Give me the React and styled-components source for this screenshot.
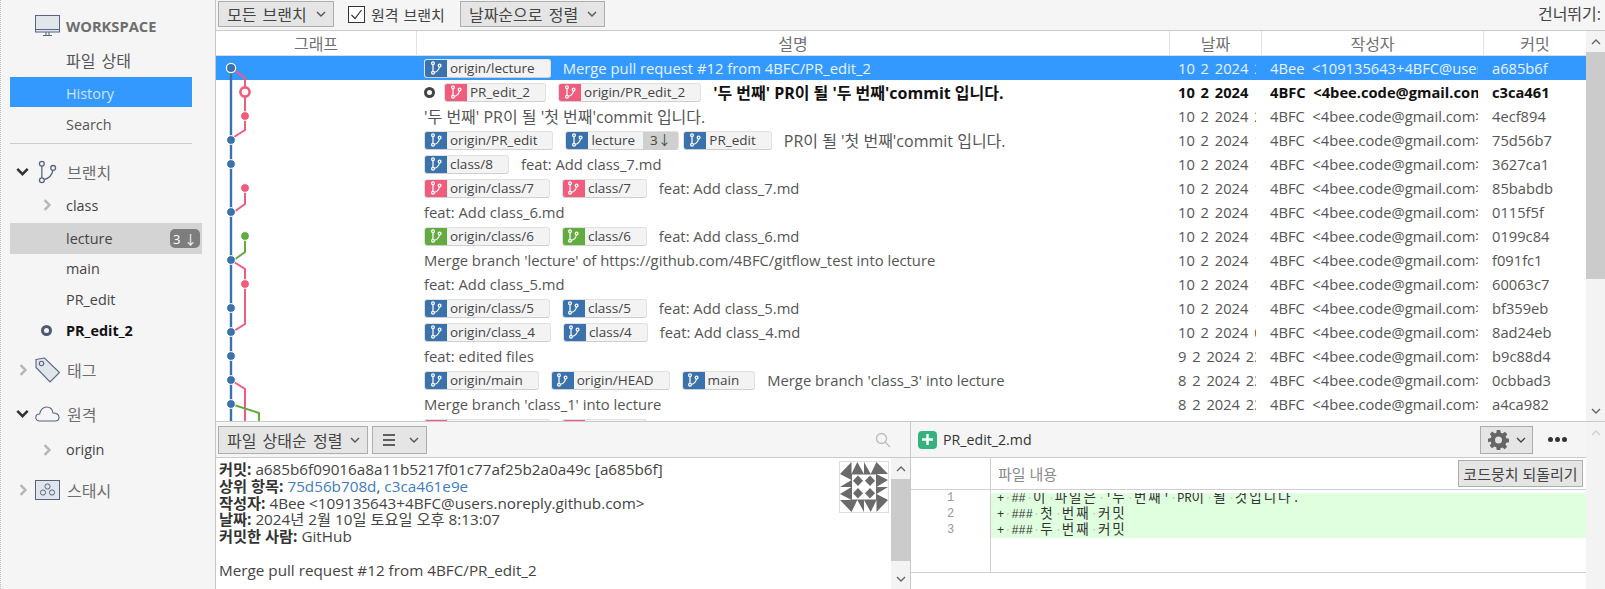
import React from 'react';
import styled, { createGlobalStyle } from 'styled-components';

const Global = createGlobalStyle`
  html, body { margin: 0; padding: 0; background: #f5f5f5; }
  * { box-sizing: border-box; }
  body { font-family: "Open Sans", "Noto Sans CJK KR", sans-serif; font-size: 14px; color: #444; }
`;

const App_ = styled.div`display:flex;width:1605px;height:589px;overflow:hidden;background:#f5f5f5;`;
const Sidebar = styled.aside`width:216px;flex:none;background:#f5f5f5;border-left:1px dotted #bbb;border-right:1px solid #c8c8c8;padding:0 23px 0 9px;display:flex;flex-direction:column;`;
const WorkspaceHead = styled.div`height:46px;display:flex;align-items:center;gap:5px;padding:6px 0 0 25px;font-weight:700;color:#6e6e6e;font-size:14.7px;`;
const NavItem = styled.div`height:${p => p.$h || 31}px;line-height:${p => p.$h || 31}px;padding-left:56px;padding-top:${p => p.$pt || 0}px;box-sizing:content-box;font-size:${p => p.$ko ? 16 : 14.4}px;word-spacing:${p => p.$ko ? 2 : 0}px;
  color:${p => p.$active ? '#cfe4ff' : '#555'};background:${p => p.$active ? '#3399ff' : 'transparent'};`;
const Divider = styled.div`height:1px;background:#ccc;margin:3px 0 12px;`;
const SectionHead = styled.div`display:flex;align-items:center;height:31px;color:#6e6e6e;font-size:16px;margin-top:${p => p.$mt || 0}px;`;
const HeadChevron = styled.span`width:25px;display:flex;justify-content:center;color:${p => p.$open ? '#333' : '#b5b5b5'};`;
const HeadIcon = styled.span`width:32px;display:flex;justify-content:flex-start;`;
const BranchItem = styled.div`position:relative;display:flex;align-items:center;height:${p => p.$h || 30.6}px;padding-left:56px;margin-right:${p => p.$wide ? -10 : 0}px;
  background:${p => p.$wide ? '#d4d4d4' : 'transparent'};font-size:14.4px;font-weight:${p => p.$bold ? 700 : 400};color:${p => p.$bold ? '#111' : '#444'};`;
const ItemMark = styled.span`position:absolute;left:31px;display:flex;color:#b5b5b5;`;
const HeadDot = styled.span`position:absolute;left:31px;width:11px;height:11px;border-radius:50%;border:3px solid #4d5a70;`;
const CountBadge = styled.span`margin-left:auto;margin-right:2px;width:30px;height:19px;border-radius:5px;background:#7d7d7d;color:#fff;font-size:13px;display:flex;align-items:center;justify-content:center;`;

const Main = styled.main`flex:1;min-width:0;display:flex;flex-direction:column;`;
const TopBar = styled.div`height:31px;flex:none;display:flex;align-items:flex-start;padding:1px 4px 0 2px;border-bottom:1px solid #cacaca;background:#f5f5f5;`;
const DropBtn = styled.button`height:${p => p.$h || 26}px;width:${p => p.$w}px;margin-right:${p => p.$mr || 0}px;flex:none;padding:0 0 0 8px;display:flex;align-items:center;justify-content:space-between;
  border:1px solid #adadad;background:#e5e5e5;font:inherit;font-size:16px;word-spacing:2px;color:#444;`;
const BtnChevron = styled.span`display:flex;padding-right:7px;color:#555;`;
const CheckLabel = styled.label`display:flex;align-items:center;gap:6px;height:26px;margin:0 15px 0 14px;font-size:15px;word-spacing:1px;color:#444;`;
const CheckBox = styled.span`width:17px;height:17px;border:1px solid #333;background:#fff;display:flex;align-items:center;justify-content:center;`;
const SkipLabel = styled.span`margin-left:auto;height:26px;line-height:26px;font-size:16px;color:#444;`;

const ListArea = styled.div`height:390px;flex:none;display:flex;background:#fff;`;
const ListBody = styled.div`position:relative;flex:1;min-width:0;overflow:hidden;`;
const gridCols = '201px 753px 92px 222px 102px';
const HeaderRow = styled.div`display:grid;grid-template-columns:${gridCols};height:25px;border-bottom:1px solid #dcdcdc;`;
const HeaderCell = styled.div`display:flex;align-items:center;justify-content:center;color:#707070;font-size:16px;border-right:${p => p.$last ? 0 : 1}px solid #e2e2e2;`;
const Row = styled.div`display:grid;grid-template-columns:${gridCols};height:24px;align-items:center;
  background:${p => p.$sel ? '#3399ff' : 'transparent'};color:${p => p.$sel ? '#e8f3ff' : p.$bold ? '#111' : '#555'};font-weight:${p => p.$bold ? 700 : 400};font-size:14.7px;`;
const DescCell = styled.div`display:flex;align-items:center;height:24px;padding-left:7px;white-space:nowrap;overflow:hidden;`;
const Message = styled.span`font-size:${p => p.$ko ? 16 : 14.8}px;`;
const DateCell = styled.div`margin:0 6px 0 8px;white-space:pre;overflow:hidden;height:24px;line-height:24px;word-spacing:2px;`;
const ClipCell = styled.div`margin:0 6px 0 8px;white-space:pre;overflow:hidden;height:24px;line-height:24px;`;
const TagChip = styled.span`display:flex;align-items:stretch;flex:none;height:19px;margin-right:${p => p.$mr ?? 12}px;border-radius:3px;background:#f3f3f3;border:1px solid #e2e2e2;border-bottom-color:#cfcfcf;overflow:hidden;color:#444;font-weight:400;font-size:13.5px;`;
const TagIcon = styled.span`width:23px;flex:none;display:flex;align-items:center;justify-content:center;background:${p => p.$c};margin:-1px 0 -1px -1px;`;
const TagName = styled.span`padding:0 15px 0 3px;line-height:17px;`;
const TagCount = styled.span`background:#cfcfcf;padding:0 7px;line-height:17px;margin-left:-7px;`;
const CurrentDot = styled.span`width:11px;height:11px;margin:0 9px 0 0;border-radius:50%;border:3px solid #444;flex:none;`;
const GraphLayer = styled.svg`position:absolute;left:0;top:0;pointer-events:none;`;

const Track = styled.div`width:19px;flex:none;background:#f3f3f3;display:flex;flex-direction:column;`;
const TrackBtn = styled.div`height:21px;flex:none;display:flex;align-items:center;justify-content:center;color:${p => p.$dim ? '#d0d0d0' : '#666'};`;
const Thumb = styled.div`height:${p => p.$h}px;flex:none;background:#cbcbcb;`;
const TrackGap = styled.div`flex:1;`;

const Bottom = styled.div`flex:1;min-height:0;display:flex;border-top:1px solid #cacaca;background:#fff;`;
const LeftPane = styled.section`width:695px;flex:none;display:flex;flex-direction:column;border-right:1px solid #cacaca;`;
const PaneBar = styled.div`height:36px;flex:none;display:flex;align-items:center;background:#f5f5f5;border-bottom:1px solid #cacaca;padding-left:2px;`;
const SearchIcon = styled.span`margin-left:auto;margin-right:19px;display:flex;color:#bdbdbd;`;
const DetailWrap = styled.div`flex:1;min-height:0;display:flex;`;
const DetailText = styled.div`flex:1;min-width:0;padding:3px 0 0 3px;font-size:15.25px;line-height:16.75px;color:#444;white-space:pre;`;
const Label = styled.b`font-weight:700;color:#333;`;
const Hash = styled.span`color:#3f7cbd;`;
const Avatar = styled.svg`flex:none;margin:3px 2px 0 0;border:1px solid #ddd;background:#fff;`;
const RightPane = styled.section`flex:1;min-width:0;display:flex;`;
const RightCol = styled.div`flex:1;min-width:0;display:flex;flex-direction:column;background:#fff;`;
const FileBar = styled.div`height:36px;flex:none;display:flex;align-items:center;padding-left:7px;background:#f5f5f5;border-bottom:1px solid #cacaca;font-size:14.2px;color:#333;`;
const PlusBadge = styled.span`width:19px;height:18px;border-radius:4px;background:#35b27d;color:#fff;display:flex;align-items:center;justify-content:center;margin-right:6px;`;
const GearBtn = styled.button`margin-left:auto;width:53px;height:28px;display:flex;align-items:center;gap:7px;padding:0 0 0 7px;border:1px solid #adadad;background:#e5e5e5;color:#666;`;
const GearChevron = styled.span`display:flex;color:#444;`;
const MoreDots = styled.span`margin:0 19px 0 15px;display:flex;gap:2px;`;
const Dot = styled.i`width:5px;height:5px;border-radius:50%;background:#333;`;
const ContentHead = styled.div`height:32px;flex:none;display:flex;align-items:center;border-bottom:1px solid #cfcfcf;`;
const GutterSpace = styled.div`width:80px;height:100%;flex:none;border-right:1px solid #cfcfcf;`;
const ContentTitle = styled.span`padding-left:7px;color:#8a8a8a;font-size:15px;`;
const RevertBtn = styled.button`margin-left:auto;margin-right:3px;width:125px;height:27px;border:1px solid #adadad;background:#e5e5e5;font:inherit;font-size:15px;color:#444;padding:0;white-space:nowrap;`;
const DiffWrap = styled.div`height:83px;flex:none;display:flex;border-bottom:1px solid #cfcfcf;`;
const Gutter = styled.div`width:80px;flex:none;border-right:1px solid #cfcfcf;font-family:"Liberation Mono",monospace;font-size:12px;line-height:16px;color:#999;text-align:center;`;
const Lines = styled.div`flex:1;min-width:0;padding-top:3px;`;
const LinesClip = styled.div`overflow:hidden;`;
const LinesInner = styled.div`margin-top:-3px;`;
const CodeLine = styled.div`height:16px;line-height:16px;background:#dfffdf;padding-left:6px;font-family:"Liberation Mono",monospace;font-size:12px;color:#333;white-space:pre;`;
const Ko = styled.span`font-family:"Noto Sans CJK KR",sans-serif;font-size:13.5px;letter-spacing:2px;line-height:1;`;
const Ws = styled.span`color:#c2d6c2;`;

const BranchGlyph = ({ size = 14, c = '#fff', w = 1.25 }) => (
  <svg width={size} height={size} viewBox="0 0 14 14" fill="none" stroke={c} strokeWidth={w}>
    <circle cx="4" cy="2.2" r="1.4" /><circle cx="4" cy="11.8" r="1.4" /><circle cx="10.6" cy="4.6" r="1.4" />
    <path d="M4 3.6V10.4M10.4 6C10 8.6 8 10.6 5.4 11.4" />
  </svg>
);
const Chev = ({ d, size = 10, w = 1.4 }) => {
  const p = { down: 'M1 3l4 4 4-4', right: 'M3 1l4 4-4 4', up: 'M1 7l4-4 4 4' }[d];
  return <svg width={size} height={size} viewBox="0 0 10 10" fill="none" stroke="currentColor" strokeWidth={w}><path d={p} /></svg>;
};
const S = '#56657f';
const MonitorIcon = () => (
  <svg width="26" height="22" viewBox="0 0 26 22" fill="#e1e5ec" stroke={S} strokeWidth="1">
    <rect x=".5" y=".5" width="24" height="16.5" /><path d="M.5 14.5h24" fill="none" /><path d="M8 20.5h9M11 17v3.5M14 17v3.5" fill="none" />
  </svg>
);
const TagGlyph = () => (
  <svg width="26" height="26" viewBox="0 0 26 26" fill="#e1e5ec" stroke={S} strokeWidth="1.1">
    <path d="M1 2.5 9.5 1 24.5 15.5 15 25 1 10.5Z" /><circle cx="6.5" cy="6.5" r="2.2" fill="none" />
  </svg>
);
const CloudIcon = () => (
  <svg width="25" height="16" viewBox="0 0 25 16" fill="none" stroke={S} strokeWidth="1.1">
    <path d="M5 15C2 15 .8 13 .8 11.5 .8 9.5 2.5 8 4.6 8 5.2 3.5 8.5 1 11.5 1c3.5 0 6 2.5 6.5 6 3 -.2 6 1.5 6 4.2 0 2.2-1.6 3.8-4 3.8Z" />
  </svg>
);
const StashIcon = () => (
  <svg width="25" height="20" viewBox="0 0 25 20" fill="#e1e5ec" stroke={S} strokeWidth="1">
    <rect x=".5" y=".5" width="24" height="19" /><circle cx="12.5" cy="6.5" r="2.6" fill="none" /><circle cx="8" cy="12.5" r="2.6" fill="none" /><circle cx="17" cy="12.5" r="2.6" fill="none" />
  </svg>
);

const BLUE = '#3a72ae', PINK = '#f25c7c', GREEN = '#62ac3f';
const nodes = [
  [231, 68, BLUE], [245, 116, PINK], [231, 140, BLUE], [231, 164, BLUE], [245, 188, PINK], [231, 212, BLUE], [245, 236, GREEN],
  [231, 260, BLUE], [245, 284, PINK], [231, 308, BLUE], [231, 332, BLUE], [231, 356, BLUE], [231, 380, BLUE], [231, 404, BLUE],
].map(([x, y, c]) => [x - 216, y - 31, c]);
const Graph = () => (
  <GraphLayer width="201" height="390" viewBox="0 0 201 390" fill="none">
    <path d="M15 37V390" stroke={BLUE} strokeWidth="2.4" />
    <path d="M15 37 29 47V99L18 106" stroke={PINK} strokeWidth="2" />
    <path d="M29 157V173L18 181" stroke={PINK} strokeWidth="2" />
    <path d="M29 205V221L18 229" stroke={GREEN} strokeWidth="2" />
    <path d="M18 231 29 238V293L18 300" stroke={PINK} strokeWidth="2" />
    <path d="M18 351 29 358V390" stroke={PINK} strokeWidth="2" />
    <path d="M18 374 43 382V390" stroke={GREEN} strokeWidth="2" />
    {nodes.map(([x, y, c], i) => (
      <circle key={i} cx={x} cy={y} r={i === 0 ? 4.6 : 4.4} fill={c} stroke="#fff" strokeWidth={i === 0 ? 1.2 : 1} />
    ))}
    <circle cx="29" cy="61" r="4.6" fill="#fff" stroke={PINK} strokeWidth="2.6" />
  </GraphLayer>
);

const identiconWhite = 'M0 0H12L0 12ZM12 0H18L12 12ZM18 0H25V12ZM0 12 12 18 0 25ZM12.500 12.500H25V25H12.500Z';
const identiconDark = 'M18.700 13.500 24 18.700 18.700 24 13.500 18.700Z';
const Identicon = () => (
  <Avatar width="50" height="52" viewBox="0 0 50 50" preserveAspectRatio="none">
    <rect width="50" height="50" fill="#6a6a6a" />
    {[0, 90, 180, 270].map(r => (
      <g key={r} transform={`rotate(${r} 25 25)`}>
        <path d={identiconWhite} fill="#fff" />
        <path d={identiconDark} fill="#6a6a6a" />
      </g>
    ))}
  </Avatar>
);

const B = 'blue', P = 'pink', G = 'green';
const colorOf = { blue: BLUE, pink: PINK, green: GREEN };
const mail = '4BFC  <4bee.code@gmail.com>';
const rows = [
  { tags: [['origin/lecture', B]], msg: 'Merge pull request #12 from 4BFC/PR_edit_2', date: '10 2 2024 20:13', au: '4Bee  <109135643+4BFC@users.noreply', h: 'a685b6f', sel: true },
  { cur: true, tags: [['PR_edit_2', P], ['origin/PR_edit_2', P]], msg: "'두 번째' PR이 될 '두 번째'commit 입니다.", date: '10 2 2024', au: mail, h: 'c3ca461', bold: true },
  { tags: [], msg: "'두 번째' PR이 될 '첫 번째'commit 입니다.", date: '10 2 2024 20:05', au: mail, h: '4ecf894' },
  { tags: [['origin/PR_edit', B], ['lecture', B, '3↓'], ['PR_edit', B]], msg: "PR이 될 '첫 번째'commit 입니다.", date: '10 2 2024 19:50', au: mail, h: '75d56b7' },
  { tags: [['class/8', B]], msg: 'feat: Add class_7.md', date: '10 2 2024 19:40', au: mail, h: '3627ca1' },
  { tags: [['origin/class/7', P], ['class/7', P]], msg: 'feat: Add class_7.md', date: '10 2 2024 19:30', au: mail, h: '85babdb' },
  { tags: [], msg: 'feat: Add class_6.md', date: '10 2 2024 19:20', au: mail, h: '0115f5f' },
  { tags: [['origin/class/6', G], ['class/6', G]], msg: 'feat: Add class_6.md', date: '10 2 2024 19:10', au: mail, h: '0199c84' },
  { tags: [], msg: "Merge branch 'lecture' of https://github.com/4BFC/gitflow_test into lecture", date: '10 2 2024 18:55', au: mail, h: 'f091fc1' },
  { tags: [], msg: 'feat: Add class_5.md', date: '10 2 2024 18:40', au: mail, h: '60063c7' },
  { tags: [['origin/class/5', B], ['class/5', B]], msg: 'feat: Add class_5.md', date: '10 2 2024 18:30', au: mail, h: 'bf359eb' },
  { tags: [['origin/class_4', B], ['class/4', B]], msg: 'feat: Add class_4.md', date: '10 2 2024 00:30', au: mail, h: '8ad24eb' },
  { tags: [], msg: 'feat: edited files', date: '9 2 2024 23:30', au: mail, h: 'b9c88d4' },
  { tags: [['origin/main', B], ['origin/HEAD', B], ['main', B]], msg: "Merge branch 'class_3' into lecture", date: '8 2 2024 23:30', au: mail, h: '0cbbad3' },
  { tags: [], msg: "Merge branch 'class_1' into lecture", date: '8 2 2024 23:10', au: mail, h: 'a4ca982' },
  { tags: [['origin/class/3', P], ['class/3', P]], msg: '', date: '', au: '', h: '' },
];

const Tag = ({ name, color, count }) => (
  <TagChip $mr={count ? 4 : undefined}>
    <TagIcon $c={colorOf[color]}><BranchGlyph /></TagIcon>
    <TagName>{name}</TagName>
    {count && <TagCount>{count}</TagCount>}
  </TagChip>
);

const code = [
  <>+<Ws>·</Ws>##<Ws>·</Ws><Ko>이</Ko><Ws>·</Ws><Ko>파일은</Ko><Ws>·</Ws>'<Ko>두</Ko><Ws>·</Ws><Ko>번째</Ko>'<Ws>·</Ws>PR<Ko>이</Ko><Ws>·</Ws><Ko>될</Ko><Ws>·</Ws><Ko>것입니다</Ko>.</>,
  <>+<Ws>·</Ws>###<Ws>·</Ws><Ko>첫</Ko><Ws>·</Ws><Ko>번째</Ko><Ws>·</Ws><Ko>커밋</Ko></>,
  <>+<Ws>·</Ws>###<Ws>·</Ws><Ko>두</Ko><Ws>·</Ws><Ko>번째</Ko><Ws>·</Ws><Ko>커밋</Ko></>,
];

export default function App() {
  return (
    <App_>
      <Global />
      <Sidebar>
        <WorkspaceHead><MonitorIcon />WORKSPACE</WorkspaceHead>
        <NavItem $ko>파일 상태</NavItem>
        <NavItem $active $h={27} $pt={3}>History</NavItem>
        <NavItem $pt={2}>Search</NavItem>
        <Divider />
        <SectionHead><HeadChevron $open><Chev d="down" size={13} w={2} /></HeadChevron><HeadIcon><BranchGlyph size={24} c={S} w={.75} /></HeadIcon>브랜치</SectionHead>
        <BranchItem $h={36}><ItemMark><Chev d="right" size={12} w={2} /></ItemMark>class</BranchItem>
        <BranchItem $wide>lecture<CountBadge>3 ↓</CountBadge></BranchItem>
        <BranchItem>main</BranchItem>
        <BranchItem>PR_edit</BranchItem>
        <BranchItem $bold><HeadDot />PR_edit_2</BranchItem>
        <SectionHead $mt={9}><HeadChevron><Chev d="right" size={12} w={2} /></HeadChevron><HeadIcon><TagGlyph /></HeadIcon>태그</SectionHead>
        <SectionHead $mt={13}><HeadChevron $open><Chev d="down" size={13} w={2} /></HeadChevron><HeadIcon><CloudIcon /></HeadIcon>원격</SectionHead>
        <BranchItem $h={41}><ItemMark><Chev d="right" size={12} w={2} /></ItemMark>origin</BranchItem>
        <SectionHead $mt={4}><HeadChevron><Chev d="right" size={12} w={2} /></HeadChevron><HeadIcon><StashIcon /></HeadIcon>스태시</SectionHead>
      </Sidebar>
      <Main>
        <TopBar>
          <DropBtn $w={116}>모든 브랜치<BtnChevron><Chev d="down" /></BtnChevron></DropBtn>
          <CheckLabel><CheckBox><svg width="13" height="13" viewBox="0 0 13 13" fill="none" stroke="#333" strokeWidth="1.2"><path d="M1.5 7 5 10.5 11.5 2" /></svg></CheckBox>원격 브랜치</CheckLabel>
          <DropBtn $w={145}>날짜순으로 정렬<BtnChevron><Chev d="down" /></BtnChevron></DropBtn>
          <SkipLabel>건너뛰기:</SkipLabel>
        </TopBar>
        <ListArea>
          <ListBody>
            <HeaderRow>
              <HeaderCell>그래프</HeaderCell><HeaderCell>설명</HeaderCell><HeaderCell>날짜</HeaderCell><HeaderCell>작성자</HeaderCell><HeaderCell $last>커밋</HeaderCell>
            </HeaderRow>
            {rows.map((r, i) => (
              <Row key={i} $sel={r.sel} $bold={r.bold}>
                <span />
                <DescCell>
                  {r.cur && <CurrentDot />}
                  {r.tags.map(([n, c, cnt]) => <Tag key={n} name={n} color={c} count={cnt} />)}
                  <Message $ko={/[가-힣]/.test(r.msg)}>{r.msg}</Message>
                </DescCell>
                <DateCell>{r.date}</DateCell>
                <ClipCell>{r.au}</ClipCell>
                <ClipCell>{r.h}</ClipCell>
              </Row>
            ))}
            <Graph />
          </ListBody>
          <Track>
            <TrackBtn><Chev d="up" /></TrackBtn><Thumb $h={227} /><TrackGap /><TrackBtn><Chev d="down" /></TrackBtn>
          </Track>
        </ListArea>
        <Bottom>
          <LeftPane>
            <PaneBar>
              <DropBtn $w={150} $h={28} $mr={4}>파일 상태순 정렬<BtnChevron><Chev d="down" /></BtnChevron></DropBtn>
              <DropBtn $w={55} $h={28}>
                <svg width="16" height="14" viewBox="0 0 16 14" stroke="#333" strokeWidth="1.5"><path d="M2 2h12M2 7h12M2 12h12" /></svg>
                <BtnChevron><Chev d="down" /></BtnChevron>
              </DropBtn>
              <SearchIcon><svg width="16" height="16" viewBox="0 0 16 16" fill="none" stroke="currentColor" strokeWidth="1.3"><circle cx="6.5" cy="6.5" r="5" /><path d="M10 10l5 5" /></svg></SearchIcon>
            </PaneBar>
            <DetailWrap>
              <DetailText>
                <Label>커밋:</Label> a685b6f09016a8a11b5217f01c77af25b2a0a49c [a685b6f]{'\n'}
                <Label>상위 항목:</Label> <Hash>75d56b708d</Hash>, <Hash>c3ca461e9e</Hash>{'\n'}
                <Label>작성자:</Label> 4Bee &lt;109135643+4BFC@users.noreply.github.com&gt;{'\n'}
                <Label>날짜:</Label> 2024년 2월 10일 토요일 오후 8:13:07{'\n'}
                <Label>커밋한 사람:</Label> GitHub{'\n\n'}
                Merge pull request #12 from 4BFC/PR_edit_2
              </DetailText>
              <Identicon />
              <Track>
                <TrackBtn><Chev d="up" /></TrackBtn><Thumb $h={82} /><TrackGap /><TrackBtn><Chev d="down" /></TrackBtn>
              </Track>
            </DetailWrap>
          </LeftPane>
          <RightPane>
            <RightCol>
              <FileBar>
                <PlusBadge><svg width="11" height="11" viewBox="0 0 11 11" stroke="#fff" strokeWidth="2.4"><path d="M5.500 0v11M0 5.500h11" /></svg></PlusBadge>
                PR_edit_2.md
                <GearBtn>
                  <svg width="21" height="21" viewBox="0 0 24 24" fill="currentColor" fillRule="evenodd"><path d="M10 1h4l.6 3.2 2 .8 2.700-1.900 2.800 2.800L20.200 8.600l.8 2 3 .4v4l-3.200.6-.8 2 1.900 2.700-2.800 2.800-2.700-1.900-2 .8L14 24h-4l-.6-3.200-2-.8-2.700 1.900-2.800-2.800 1.900-2.700-.8-2L0 15v-4l3.200-.6.8-2L2.100 5.700l2.800-2.800L7.600 5l2-.8ZM12 8.500a4 4 0 1 0 0 8 4 4 0 0 0 0-8Z" /></svg>
                  <GearChevron><Chev d="down" /></GearChevron>
                </GearBtn>
                <MoreDots><Dot /><Dot /><Dot /></MoreDots>
              </FileBar>
              <ContentHead>
                <GutterSpace />
                <ContentTitle>파일 내용</ContentTitle>
                <RevertBtn>코드뭉치 되돌리기</RevertBtn>
              </ContentHead>
              <DiffWrap>
                <Gutter>1<br />2<br />3</Gutter>
                <Lines>
                  <LinesClip>
                    <LinesInner>
                      {code.map((c, i) => <CodeLine key={i}>{c}</CodeLine>)}
                    </LinesInner>
                  </LinesClip>
                </Lines>
              </DiffWrap>
            </RightCol>
            <Track>
              <TrackBtn $dim><Chev d="up" /></TrackBtn>
            </Track>
          </RightPane>
        </Bottom>
      </Main>
    </App_>
  );
}
